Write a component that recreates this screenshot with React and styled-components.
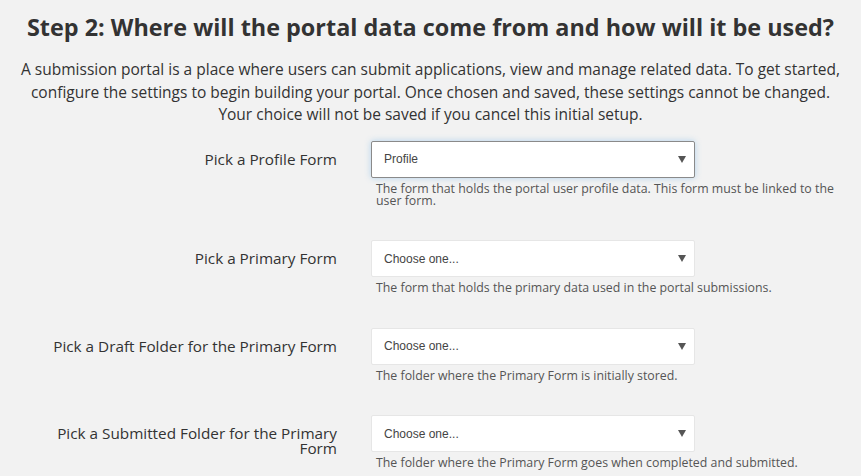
import React from "react";
import styled, { createGlobalStyle } from "styled-components";

const GlobalStyle = createGlobalStyle`
  html, body {
    margin: 0;
    padding: 0;
    background: #f2f2f2;
  }
  body {
    font-family: "Open Sans", "Liberation Sans", sans-serif;
    color: #333;
  }
`;

const Page = styled.div`
  width: 861px;
  height: 476px;
  overflow: hidden;
  background: #f2f2f2;
`;

const Title = styled.h2`
  margin: 12px 0 0;
  text-align: center;
  font-size: 23.4px;
  line-height: 31px;
  font-weight: 700;
  color: #333;
`;

const Intro = styled.p`
  margin: 15px auto 0;
  width: 832px;
  text-align: center;
  font-size: 15.5px;
  line-height: 22.5px;
  color: #333;
`;

const FormGrid = styled.div`
  display: grid;
  grid-template-columns: 300px 1fr;
  column-gap: 34px;
  padding: 15px 20px 0 37px;
`;

const FieldRow = styled.div`
  display: contents;
`;

const Label = styled.label`
  text-align: right;
  font-size: 15.3px;
  line-height: 15px;
  padding-top: 11px;
  color: #333;
`;

const Control = styled.div`
  padding-bottom: 33.5px;
`;

const SelectWrap = styled.div`
  position: relative;
  width: 324px;
`;

const Select = styled.select`
  appearance: none;
  -webkit-appearance: none;
  display: block;
  width: 100%;
  height: 37px;
  box-sizing: border-box;
  padding: 0 12px;
  background: #fff;
  border: 1px solid ${(p) => (p.$focused ? "#8a8a8a" : "#e6e6e6")};
  border-radius: 2px;
  box-shadow: ${(p) =>
    p.$focused ? "0 0 6px rgba(102, 175, 233, 0.45)" : "none"};
  font-family: "Liberation Sans", Arial, sans-serif;
  font-size: 12px;
  color: #444;
  outline: none;
`;

const Arrow = styled.svg`
  position: absolute;
  right: 9px;
  top: 15px;
  pointer-events: none;
`;

const Help = styled.div`
  margin-top: 5px;
  padding-left: 5px;
  font-size: 12.35px;
  line-height: 12px;
  color: #555;
  max-width: 470px;
`;

const fields = [
  {
    label: "Pick a Profile Form",
    value: "Profile",
    help: "The form that holds the portal user profile data. This form must be linked to the user form.",
    focused: true,
  },
  {
    label: "Pick a Primary Form",
    value: "Choose one...",
    help: "The form that holds the primary data used in the portal submissions.",
  },
  {
    label: "Pick a Draft Folder for the Primary Form",
    value: "Choose one...",
    help: "The folder where the Primary Form is initially stored.",
  },
  {
    label: "Pick a Submitted Folder for the Primary Form",
    value: "Choose one...",
    help: "The folder where the Primary Form goes when completed and submitted.",
  },
];

const App = () => {
  return (
    <Page>
      <GlobalStyle />
      <Title>Step 2: Where will the portal data come from and how will it be used?</Title>
      <Intro>
        A submission portal is a place where users can submit applications, view and manage
        related data. To get started, configure the settings to begin building your portal.
        Once chosen and saved, these settings cannot be changed. Your choice will not be saved
        if you cancel this initial setup.
      </Intro>

      <FormGrid>
        {fields.map((f, idx) => (
          <FieldRow key={idx}>
            <Label>{f.label}</Label>
            <Control>
              <SelectWrap>
                <Select $focused={f.focused} defaultValue={f.value}>
                  <option>{f.value}</option>
                </Select>
                <Arrow width="8" height="7" viewBox="0 0 8 7">
                  <path d="M0 0 H8 L4 7 Z" fill="#555" />
                </Arrow>
              </SelectWrap>
              <Help>{f.help}</Help>
            </Control>
          </FieldRow>
        ))}
      </FormGrid>
    </Page>
  );
};

export default App;
